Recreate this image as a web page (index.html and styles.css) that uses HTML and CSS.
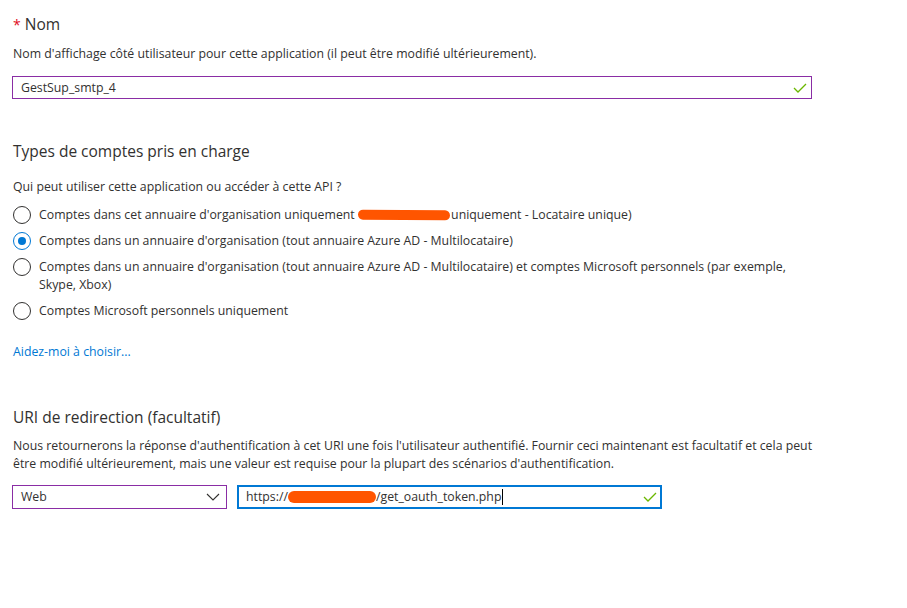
FILE: index.html
```html
<!DOCTYPE html>
<html lang="fr">
<head>
<meta charset="utf-8">
<title>Inscrire une application</title>
<link rel="stylesheet" href="styles.css">
</head>
<body>
<main class="form">
  <section class="block block-name">
    <div class="title"><span class="req">*</span> Nom</div>
    <p class="desc">Nom d'affichage côté utilisateur pour cette application (il peut être modifié ultérieurement).</p>
    <div class="field field-name">
      <span class="value">GestSup_smtp_4</span>
      <svg class="check" width="14" height="10" viewBox="0 0 14 10"><path d="M1 5 L5 9 L13 1" fill="none" stroke="#6bb700" stroke-width="1.3"/></svg>
    </div>
  </section>

  <section class="block block-types">
    <div class="title">Types de comptes pris en charge</div>
    <p class="desc">Qui peut utiliser cette application ou accéder à cette API ?</p>
    <div class="radios">
      <div class="radio"><span class="dot"></span><span class="rlabel">Comptes dans cet annuaire d'organisation uniquement <span class="redact r1"></span> uniquement - Locataire unique)</span></div>
      <div class="radio"><span class="dot on"></span><span class="rlabel">Comptes dans un annuaire d'organisation (tout annuaire Azure AD - Multilocataire)</span></div>
      <div class="radio"><span class="dot"></span><span class="rlabel">Comptes dans un annuaire d'organisation (tout annuaire Azure AD - Multilocataire) et comptes Microsoft personnels (par exemple,<br>Skype, Xbox)</span></div>
      <div class="radio"><span class="dot"></span><span class="rlabel">Comptes Microsoft personnels uniquement</span></div>
    </div>
    <a class="help" href="#">Aidez-moi à choisir...</a>
  </section>

  <section class="block block-uri">
    <div class="title">URI de redirection (facultatif)</div>
    <p class="desc">Nous retournerons la réponse d'authentification à cet URI une fois l'utilisateur authentifié. Fournir ceci maintenant est facultatif et cela peut<br>être modifié ultérieurement, mais une valeur est requise pour la plupart des scénarios d'authentification.</p>
    <div class="uri-row">
      <div class="field select">
        <span class="value">Web</span>
        <svg class="chev" width="14" height="8" viewBox="0 0 14 8"><path d="M1 1 L7 7 L13 1" fill="none" stroke="#323130" stroke-width="1.1"/></svg>
      </div>
      <div class="field uri focus">
        <span class="value">https://<span class="redact r2"></span>/get_oauth_token.php<span class="caret"></span></span>
        <svg class="check" width="14" height="10" viewBox="0 0 14 10"><path d="M1 5 L5 9 L13 1" fill="none" stroke="#6bb700" stroke-width="1.3"/></svg>
      </div>
    </div>
  </section>
</main>
</body>
</html>
```
FILE: styles.css
```css
html, body {
  margin: 0;
  padding: 0;
  background: #ffffff;
}
body {
  font-family: "Segoe UI", "Open Sans", "Noto Sans", sans-serif;
  font-size: 12.3px;
  color: #323130;
}
.form {
  padding: 13px 0 0 12px;
  width: 800px;
  display: flex;
  flex-direction: column;
}
.block {
  display: flex;
  flex-direction: column;
}
.title {
  font-size: 15.5px;
  line-height: 22px;
  padding-left: 1px;
}
.req {
  color: #e00b1c;
  font-size: 14px;
}
.desc {
  margin: 9px 0 0 1px;
  line-height: 18px;
}
.field {
  box-sizing: border-box;
  display: flex;
  align-items: center;
  justify-content: space-between;
  border: 1px solid #8a2da5;
  height: 23px;
  padding: 0 4px 0 8px;
  background: #fff;
}
.field-name {
  margin-top: 13px;
  width: 800px;
}
.value {
  line-height: 18px;
  white-space: nowrap;
}
.check {
  display: block;
}
.block-types {
  margin-top: 41px;
}
.block-types .desc {
  margin-top: 16px;
}
.radios {
  margin-top: 10px;
  display: flex;
  flex-direction: column;
  gap: 8px;
}
.radio {
  display: flex;
  align-items: flex-start;
}
.dot {
  box-sizing: border-box;
  flex: none;
  width: 18px;
  height: 18px;
  border: 1px solid #323130;
  border-radius: 50%;
  margin: 0 8px 0 1px;
  position: relative;
}
.dot.on {
  border-color: #0078d4;
}
.dot.on::after {
  content: "";
  position: absolute;
  left: 4px;
  top: 4px;
  width: 8px;
  height: 8px;
  border-radius: 50%;
  background: #0078d4;
}
.rlabel {
  line-height: 18px;
}
.redact {
  display: inline-block;
  vertical-align: -1px;
  height: 10px;
  background: #ff5500;
  border-radius: 6px;
}
.r1 {
  width: 92px;
  margin: 0 -2px 0 0;
  transform: rotate(0.5deg);
}
.r2 {
  width: 88px;
  height: 12px;
  vertical-align: -2px;
}
.help {
  margin: 23px 0 0 1px;
  line-height: 18px;
  color: #0078d4;
  text-decoration: none;
  align-self: flex-start;
}
.block-uri {
  margin-top: 45px;
}
.uri-row {
  margin-top: 12px;
  display: flex;
  gap: 10px;
}
.select {
  width: 215px;
  height: 24px;
  padding-right: 6px;
}
.uri {
  width: 425px;
  height: 24px;
}
.uri.focus {
  border: 2px solid #0078d4;
  padding: 0 3px 0 7px;
}
.caret {
  display: inline-block;
  width: 1px;
  height: 16px;
  background: #000;
  vertical-align: -4px;
  margin-left: 1px;
}
```
